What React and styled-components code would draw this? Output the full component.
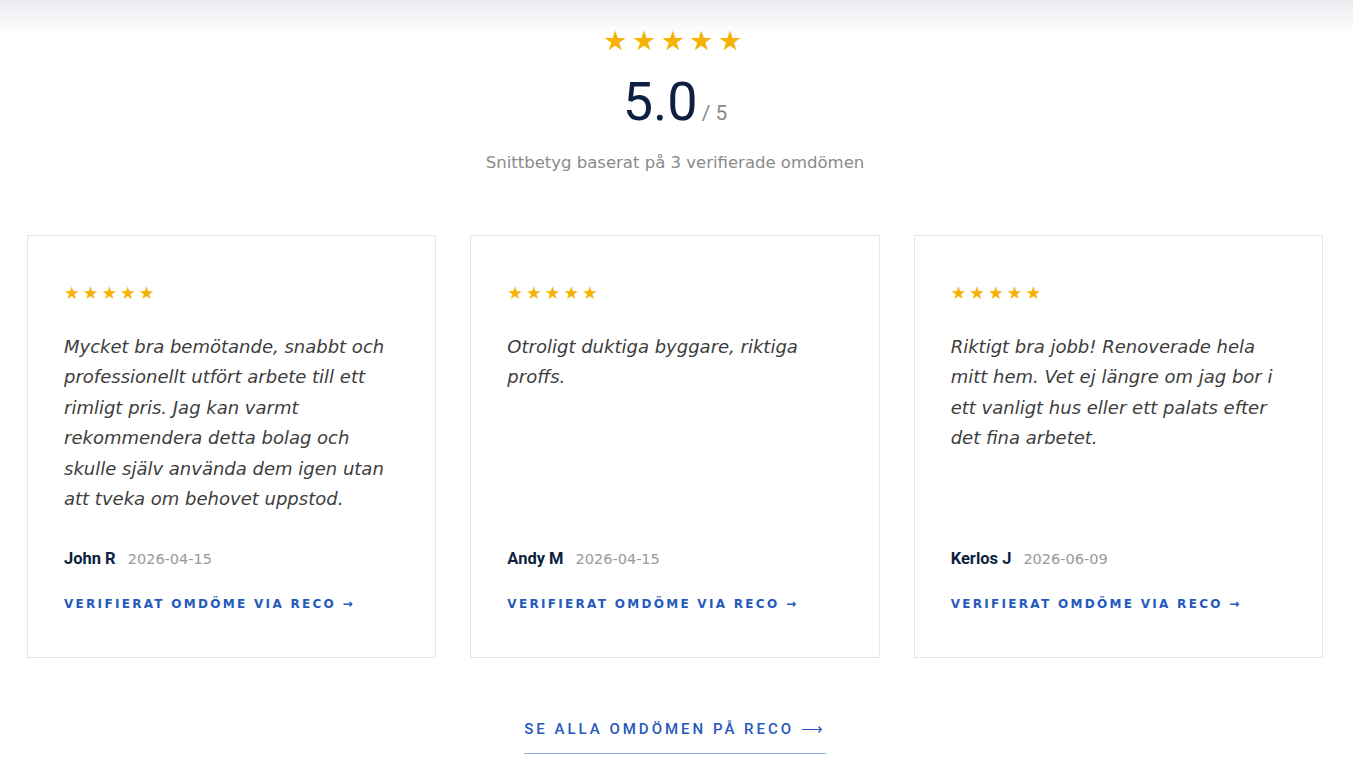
import React from "react";
import styled, { createGlobalStyle } from "styled-components";

const GlobalStyle = createGlobalStyle`
    body {
        margin: 0;
        background: #ffffff;
        font-family: "DejaVu Sans", sans-serif;
    }
`;

const Section = styled.section`
    background: linear-gradient(180deg, #ebecf0 0px, #ffffff 36px);
    padding: 27px 30px 19px 27px;
`;

const Summary = styled.div`
    display: flex;
    flex-direction: column;
    align-items: center;
    text-align: center;
`;

const Stars = styled.div`
    color: #f5b301;
    font-family: "DejaVu Sans", sans-serif;
    font-size: ${p => (p.$big ? "27px" : "17.5px")};
    letter-spacing: ${p => (p.$big ? "4.5px" : "3px")};
    line-height: 1;
`;

const Score = styled.div`
    margin-top: 18px;
    display: flex;
    align-items: baseline;
    gap: 4px;
    font-family: Roboto, sans-serif;
`;

const ScoreValue = styled.span`
    font-size: 54px;
    color: #0e1f42;
    line-height: 1.1;
`;

const ScoreMax = styled.span`
    font-size: 21px;
    color: #8a8a8a;
`;

const Caption = styled.p`
    margin: 22px 0 0;
    font-size: 16.5px;
    color: #8a8a8a;
`;

const Grid = styled.div`
    margin-top: 63px;
    display: grid;
    grid-template-columns: repeat(3, 1fr);
    gap: 34px;
`;

const Card = styled.article`
    border: 1px solid #e2e6ee;
    padding: 49px 36px 46px;
    display: flex;
    flex-direction: column;
    min-height: 422px;
    box-sizing: border-box;
`;

const Quote = styled.p`
    flex: 1;
    margin: 29px 0 34px;
    font-style: italic;
    font-size: 18px;
    line-height: 30.5px;
    color: #3d3d3d;
`;

const Author = styled.div`
    display: flex;
    align-items: baseline;
    gap: 12px;
`;

const Name = styled.span`
    font-family: Roboto, sans-serif;
    font-weight: 700;
    font-size: 16.5px;
    color: #0e1f42;
`;

const DateText = styled.span`
    font-size: 14.5px;
    color: #999999;
`;

const CardLink = styled.a`
    margin-top: 29px;
    font-weight: 700;
    font-size: 12px;
    letter-spacing: 2.3px;
    color: #2459bd;
    text-decoration: none;
`;

const Footer = styled.div`
    display: flex;
    justify-content: center;
    margin-top: 62px;
`;

const AllLink = styled.a`
    font-family: Roboto, sans-serif;
    font-weight: 500;
    font-size: 15px;
    letter-spacing: 3px;
    color: #2459bd;
    text-decoration: none;
    padding-bottom: 15px;
    border-bottom: 1px solid #8eaee6;
`;

const reviews = [
    {
        text: "Mycket bra bemötande, snabbt och professionellt utfört arbete till ett rimligt pris. Jag kan varmt rekommendera detta bolag och skulle själv använda dem igen utan att tveka om behovet uppstod.",
        name: "John R",
        date: "2026-04-15",
    },
    {
        text: "Otroligt duktiga byggare, riktiga proffs.",
        name: "Andy M",
        date: "2026-04-15",
    },
    {
        text: "Riktigt bra jobb! Renoverade hela mitt hem. Vet ej längre om jag bor i ett vanligt hus eller ett palats efter det fina arbetet.",
        name: "Kerlos J",
        date: "2026-06-09",
    },
];

export default function App() {
    return (
        <Section>
            <GlobalStyle />
            <Summary>
                <Stars $big>★★★★★</Stars>
                <Score>
                    <ScoreValue>5.0</ScoreValue>
                    <ScoreMax>/ 5</ScoreMax>
                </Score>
                <Caption>Snittbetyg baserat på 3 verifierade omdömen</Caption>
            </Summary>

            <Grid>
                {reviews.map(r => (
                    <Card key={r.name}>
                        <Stars>★★★★★</Stars>
                        <Quote>{r.text}</Quote>
                        <Author>
                            <Name>{r.name}</Name>
                            <DateText>{r.date}</DateText>
                        </Author>
                        <CardLink href="#">VERIFIERAT OMDÖME VIA RECO →</CardLink>
                    </Card>
                ))}
            </Grid>

            <Footer>
                <AllLink href="#">SE ALLA OMDÖMEN PÅ RECO ⟶</AllLink>
            </Footer>
        </Section>
    );
}
